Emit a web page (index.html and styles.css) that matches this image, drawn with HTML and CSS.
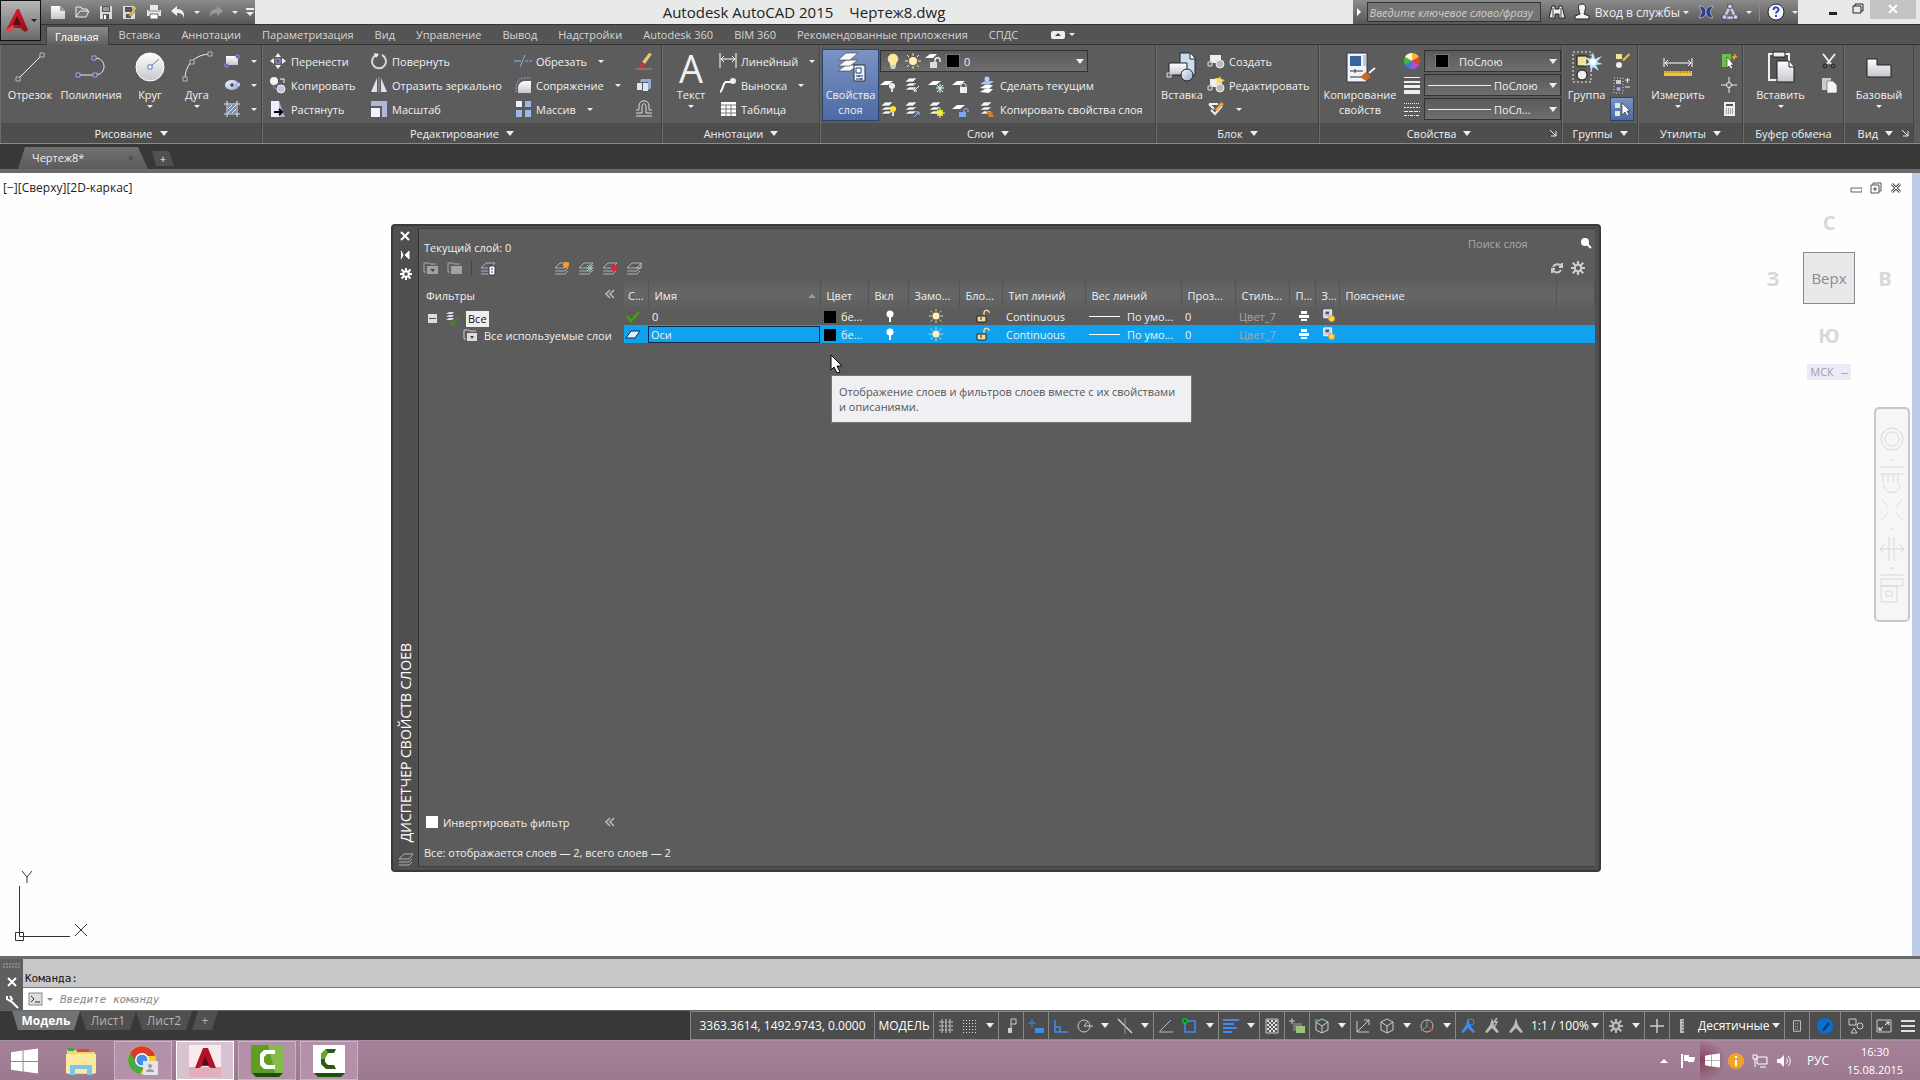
FILE: index.html
```html
<!DOCTYPE html>
<html lang="ru">
<head>
    <meta charset="UTF-8">
    <meta name="viewport" content="width=device-width, initial-scale=1.0">
    <title>Autodesk AutoCAD 2015 - Чертеж8.dwg</title>
    <link rel="stylesheet" href="styles.css">
</head>
<body>

<!-- Icon sprite -->
<svg class="sprite" aria-hidden="true">
    <defs>
        <linearGradient id="gWhite" x1="0" y1="0" x2="0" y2="1"><stop offset="0" stop-color="#fff"/><stop offset="1" stop-color="#c4c6cc"/></linearGradient>
        <linearGradient id="gRed" x1="0" y1="0" x2="1" y2="1"><stop offset="0" stop-color="#e8262f"/><stop offset="1" stop-color="#8d0c16"/></linearGradient>
        <linearGradient id="gBlue" x1="0" y1="0" x2="1" y2="1"><stop offset="0" stop-color="#f4f6fc"/><stop offset="1" stop-color="#98acd8"/></linearGradient>
    </defs>
    <symbol id="logo" viewBox="0 0 24 26"><path d="M12 1L1 22l3 2 5-4h6l5 4 3-2L14 1z" fill="url(#gRed)"/><path d="M12 8l-4 9h8z" fill="#5a0a10"/><path d="M1 22l3 2 5-4-1-3z" fill="#f0444c"/></symbol>
    <symbol id="new" viewBox="0 0 16 16"><path d="M1 2h9l5 5v8H1z" fill="url(#gWhite)"/><path d="M10 2v5h5" fill="#999"/></symbol>
    <symbol id="open" viewBox="0 0 16 16"><path d="M2 13V3h5l1 2h5v3M2 13l4-6h9l-3 6z" fill="#777" stroke="#eee"/></symbol>
    <symbol id="save" viewBox="0 0 16 16"><path d="M2 2h12v13H2z" fill="#d9dadd"/><path d="M4 2h8v6H4zM5 10h6v5H5z" fill="#555"/><path d="M5 4h6M5 6h6" stroke="#ddd"/><path d="M6 11h2v4H6z" fill="#fff"/></symbol>
    <symbol id="saveas" viewBox="0 0 16 16"><path d="M1 2h12v13H1z" fill="#d9dadd"/><path d="M3 3h7v5H3zM4 10h5v4H4z" fill="#555"/><path d="M7 11l6-9 2 2-6 8-3 1z" fill="#e8c23a" stroke="#444" stroke-width=".5"/></symbol>
    <symbol id="print" viewBox="0 0 16 16"><path d="M4 1h8v5H4zM1 6h14v6H1z" fill="#e8e8e8"/><path d="M4 10h8v5H4z" fill="#fff" stroke="#666"/><path d="M2 7h12" stroke="#888"/></symbol>
    <symbol id="undo" viewBox="0 0 16 16"><path d="M7 2L1 7l6 5V9c4 0 6 1 7 5 1-6-2-9-7-9z" fill="#eee"/></symbol>
    <symbol id="redo" viewBox="0 0 16 16"><path d="M9 2l6 5-6 5V9c-4 0-6 1-7 5-1-6 2-9 7-9z" fill="#999"/></symbol>
    <symbol id="binoc" viewBox="0 0 18 18"><path d="M4 3h3v3h4V3h3l3 12h-6v-4H7v4H1z" fill="#eee" stroke="#222"/><path d="M5 5v9M13 5v9" stroke="#444"/></symbol>
    <symbol id="person" viewBox="0 0 18 18"><path d="M9 1c4 0 4 4 3 6 0 2-1 3-1 4l5 2v3H2v-3l5-2c0-1-1-2-1-4-1-2-1-6 3-6z" fill="#f3f3f3" stroke="#222"/></symbol>
    <symbol id="exch" viewBox="0 0 16 16"><path d="M1 2c6 0 7 4 7 6S7 14 1 14l3-6z" fill="#2d3d8c" stroke="#ddd" stroke-width=".6"/><path d="M15 2c-6 0-7 4-7 6s1 6 7 6l-3-6z" fill="#2d3d8c" stroke="#ddd" stroke-width=".6"/></symbol>
    <symbol id="tri" viewBox="0 0 16 16"><path d="M8 3l5 10H3z" fill="none" stroke="#c9cdf0" stroke-width="2"/><g fill="#c9cdf0" stroke="#223" stroke-width=".6"><circle cx="8" cy="3" r="2.2"/><circle cx="13" cy="12.500" r="2.200"/><circle cx="3" cy="12.500" r="2.200"/></g></symbol>
    <symbol id="help" viewBox="0 0 18 18"><circle cx="9" cy="9" r="8" fill="#f5f6fa" stroke="#223"/><path d="M6.500 7c0-4 5.500-3 5 0 0 1.500-2.500 1.500-2.500 3.500M9 12v2" fill="none" stroke="#2447c8" stroke-width="2"/></symbol>

    <symbol id="line" viewBox="0 0 32 32"><path d="M4 28L28 4" stroke="#eee"/><path d="M2 26h4v4H2zM26 2h4v4h-4z" fill="#555" stroke="#bbb"/></symbol>
    <symbol id="pline" viewBox="0 0 32 32"><path d="M3 24h17c12 0 12-17 0-17" fill="none" stroke="#eee"/><path d="M1 22h4v4H1zM18 22h4v4h-4zM17 5h4v4h-4z" fill="#555" stroke="#a4a4ff"/></symbol>
    <symbol id="circle" viewBox="0 0 32 32"><circle cx="16" cy="16" r="14" fill="url(#gWhite)" stroke="#fff"/><path d="M16 16l9-8" stroke="#6c83b8"/><path d="M14 14h4v4h-4z" fill="#fff" stroke="#5d77c0"/></symbol>
    <symbol id="arc" viewBox="0 0 32 32"><path d="M4 28C4 14 14 3 30 3" fill="none" stroke="#eee"/><path d="M2 26h4v4H2zM9 9h4v4H9zM27 1h4v4h-4z" fill="#555" stroke="#bbb"/></symbol>
    <symbol id="rect" viewBox="0 0 16 16"><path d="M2 3h12v9H2z" fill="url(#gWhite)"/><path d="M12 2h3v3h-3zM1 11h3v3H1z" fill="#555" stroke="#8e8eff"/></symbol>
    <symbol id="ellipse" viewBox="0 0 16 16"><ellipse cx="8" cy="8" rx="7" ry="5" fill="url(#gBlue)"/><path d="M8 6v4M6 8h4" stroke="#222"/><path d="M13 6h3v3h-3z" fill="#fff" stroke="#88f"/></symbol>
    <symbol id="hatch" viewBox="0 0 16 16"><path d="M3 0v16M13 0v16M0 3h16M0 13h16" stroke="#dce6f6"/><path d="M4 4h8v8H4z" fill="#6f90bf"/><path d="M4 8l4-4M4 12l8-8M8 12l4-4" stroke="#e8f0ff"/></symbol>

    <symbol id="move" viewBox="0 0 18 18"><path d="M9 1l3 4H6zM9 17l3-4H6zM1 9l4-3v6zM17 9l-4-3v6z" fill="#f2f2f2"/><path d="M7 7h4v4H7z" fill="#555" stroke="#99f"/></symbol>
    <symbol id="copy" viewBox="0 0 18 18"><circle cx="5" cy="5" r="4" fill="#f3f3f3"/><circle cx="12" cy="13" r="4" fill="#bcc5e2" stroke="#eee"/><circle cx="7" cy="10" r="2.500" fill="none" stroke="#ccc" stroke-dasharray="1 1"/><path d="M11 3h4v4" fill="none" stroke="#fff"/></symbol>
    <symbol id="stretch" viewBox="0 0 18 18"><path d="M2 1h8v16H2z" fill="#eef"/><path d="M10 1l6 16h-6z" fill="#9fb3dd"/><path d="M5 12h7M10 9l3 3-3 3" fill="none" stroke="#000" stroke-width="2"/></symbol>
    <symbol id="rotate" viewBox="0 0 18 18"><path d="M6 3a7 7 0 1 0 6 0" fill="none" stroke="#d8d8d8" stroke-width="2"/><path d="M4 1l5 1-3 4z" fill="#eee"/></symbol>
    <symbol id="mirror" viewBox="0 0 18 18"><path d="M7 2v14H1zM11 2v14h6z" fill="#dfe3f0"/><path d="M9 1v16" stroke="#99a"/></symbol>
    <symbol id="scale" viewBox="0 0 18 18"><path d="M1 1h16v16h-5V6H1z" fill="#aeb6da"/><path d="M1 8h9v9H1z" fill="#f3f3fa"/></symbol>
    <symbol id="trim" viewBox="0 0 18 18"><path d="M0 9h7M6 15l5-12" stroke="#8fb2e6"/><path d="M11 9h7" stroke="#aaa" stroke-dasharray="3 1"/></symbol>
    <symbol id="fillet" viewBox="0 0 18 18"><path d="M4 17V12c0-4 3-7 7-7h6v12z" fill="url(#gWhite)"/><path d="M2 16V11c0-5 4-9 9-9h6" fill="none" stroke="#8fa8dd" stroke-dasharray="2 1"/></symbol>
    <symbol id="array" viewBox="0 0 18 18"><path d="M2 1h6v6H2z" fill="#f0f0f4"/><path d="M11 1h6v6h-6zM2 10h6v7H2zM11 10h6v7h-6z" fill="#9cb8e8"/></symbol>
    <symbol id="erase" viewBox="0 0 18 18"><path d="M7 10l7-9 3 1-7 10z" fill="#e9c66c"/><path d="M7 10l3 2-4 4H3z" fill="#d0342c"/><path d="M1 17h16" stroke="#e87060"/></symbol>
    <symbol id="explode" viewBox="0 0 18 18"><path d="M6 3h10v9l-3 2V6H5z" fill="#93acd0"/><path d="M2 7h5v7H2zM8 7h5v8H8z" fill="#dbe7f6"/></symbol>
    <symbol id="offset" viewBox="0 0 18 18"><path d="M1 16h16M1 13h6V6c0-3 4-3 4 0v7h6M1 10h3V6c0-7 10-7 10 0v4h3" fill="none" stroke="#ddd"/></symbol>
    <symbol id="dim" viewBox="0 0 18 18"><path d="M1 1v15M17 1v15M2 7h14M5 4L2 7l3 3M13 4l3 3-3 3" fill="none" stroke="#fff"/></symbol>
    <symbol id="leader" viewBox="0 0 18 18"><path d="M1 16c3-1 3-10 6-10h5" fill="none" stroke="#fff" stroke-width="2"/><circle cx="14" cy="5" r="3" fill="#eee"/></symbol>
    <symbol id="table" viewBox="0 0 18 18"><path d="M2 2h15v14H2z" fill="#fff"/><path d="M2 5h15M2 9h15M2 13h15M7 5v11M12 5v11" stroke="#777"/></symbol>
    <symbol id="layerprops" viewBox="0 0 32 32"><g fill="#f7f9fc" stroke="#333" stroke-width=".6"><path d="M3 20l8-6h12l-8 6z"/><path d="M3 15l8-6h12l-8 6z"/><path d="M3 9l8-7h12l-8 7z"/></g><path d="M19 14h11v16H19z" fill="#e8edf8" stroke="#333"/><path d="M21 17h5v5h-5z" fill="#fff" stroke="#24407a"/><path d="M21 25h7M21 28h7M24 24v2M26 27v2" stroke="#24407a"/></symbol>
    <symbol id="bulb" viewBox="0 0 18 18"><path d="M6 11C2 7 5 2 9 2s7 5 3 9l-1 5H7z" fill="#ffe79a" stroke="#fff3c8" stroke-width=".6"/><path d="M7 13h4v4H7z" fill="#ccc"/></symbol>
    <symbol id="sun" viewBox="0 0 18 18"><path d="M9 1v3M9 14v3M1 9h3M14 9h3M3 3l2 2M13 13l2 2M3 15l2-2M13 5l2-2" stroke="#f5e8b0"/><circle cx="9" cy="9" r="4" fill="#fff0b8"/></symbol>
    <symbol id="lockopen" viewBox="0 0 18 18"><path d="M1 6l5-4h7l-4 4z" fill="#fff"/><path d="M6 10h7v6H6z" fill="#ddd"/><path d="M11 10V8c0-3 5-3 5 0v2" fill="none" stroke="#eee" stroke-width="1.500"/></symbol>
    <symbol id="flat" viewBox="0 0 18 18"><path d="M1 9l5-4h8l-5 4z" fill="#fff"/></symbol>
    <symbol id="stack" viewBox="0 0 18 18"><g fill="#f4f4f4" stroke="#444" stroke-width=".5"><path d="M2 14l4-3h8l-4 3z"/><path d="M2 10l4-3h8l-4 3z"/><path d="M2 6l4-4h8l-4 4z"/></g></symbol>
    <symbol id="l-off" viewBox="0 0 18 18"><use href="#flat"/><circle cx="13" cy="10" r="3" fill="#eee"/><path d="M12 12h2v4h-2z" fill="#ddd"/></symbol>
    <symbol id="l-on" viewBox="0 0 18 18"><use href="#stack"/><circle cx="14" cy="9" r="3" fill="#ffe52c"/><path d="M13 12h2v4h-2z" fill="#ddd"/></symbol>
    <symbol id="l-iso" viewBox="0 0 18 18"><use href="#stack"/><path d="M16 10l-5 5m0-3v3h3" fill="none" stroke="#fff"/></symbol>
    <symbol id="l-uniso" viewBox="0 0 18 18"><use href="#stack"/><path d="M11 17l5-5m-3 0h3v3" fill="none" stroke="#9cc0ff"/></symbol>
    <symbol id="l-freeze" viewBox="0 0 18 18"><use href="#flat"/><path d="M13 8v9M9 12h8M10 9l6 7M10 16l6-7" stroke="#dff"/></symbol>
    <symbol id="l-thaw" viewBox="0 0 18 18"><use href="#stack"/><circle cx="13" cy="13" r="3" fill="#f4f03a"/><path d="M13 8v10M8 13h10M10 10l6 6M10 16l6-6" stroke="#f4f03a"/></symbol>
    <symbol id="l-lock" viewBox="0 0 18 18"><use href="#flat"/><path d="M9 11h7v6H9z" fill="#eee"/><path d="M10 11V9c0-2 5-2 5 0v2" fill="none" stroke="#eee"/></symbol>
    <symbol id="l-unlock" viewBox="0 0 18 18"><use href="#flat"/><path d="M8 12h7v5H8z" fill="#7fa6ec"/><path d="M13 12v-2c0-2 4-2 4 0v2" fill="none" stroke="#9cc0ff"/></symbol>
    <symbol id="l-cur" viewBox="0 0 18 18"><path d="M2 12l5-3h8l-4 4zM2 16l5-3h8l-4 4z" fill="#fff"/><path d="M2 8l5-3h9l-5 4z" fill="#a9c4f0"/><circle cx="9" cy="3" r="2.500" fill="#a9d0ff"/></symbol>
    <symbol id="l-match" viewBox="0 0 18 18"><use href="#stack"/><path d="M8 11l6 1 2 5h-5z" fill="#d57a26"/></symbol>
    <symbol id="insert" viewBox="0 0 32 32"><path d="M14 2h10l5 5v17H14z" fill="#c9dcf0" stroke="#223"/><path d="M24 2v6h5" fill="#fff" stroke="#223"/><path d="M3 12h18v12H3z" fill="url(#gWhite)" stroke="#222"/><circle cx="21" cy="24" r="6" fill="url(#gBlue)" stroke="#222"/><path d="M1 22h4v4H1z" fill="#666" stroke="#ddd"/></symbol>
    <symbol id="blk" viewBox="0 0 18 18"><path d="M3 3h11v8H3z" fill="#eee"/><circle cx="13" cy="12" r="4" fill="#bbb" stroke="#eee"/><path d="M1 10h4v4H1z" fill="#666" stroke="#ddd"/></symbol>
    <symbol id="blkedit" viewBox="0 0 18 18"><use href="#blk"/><path d="M13 0l1 3 4 1-3 2v3l-3-2-3 1 1-3-2-3h4z" fill="#f6dc62"/></symbol>
    <symbol id="attr" viewBox="0 0 18 18"><path d="M2 4h9M2 4l5 5M4 10l4 4 7-8" fill="none" stroke="#eee" stroke-width="2"/><path d="M8 10l6-8 3 2-7 7z" fill="#f0a030"/></symbol>
    <symbol id="matchprop" viewBox="0 0 32 32"><path d="M3 2h20v29H3z" fill="#eef2fb" stroke="#334"/><path d="M6 5h11v10H6z" fill="#36649f"/><path d="M19 4h3v11h-3z" fill="#b5cbe8"/><path d="M6 20h13M6 26h13M11 18v4" stroke="#333"/><path d="M25 22l6-5" stroke="#eee" stroke-width="2"/><path d="M16 26l6-5 5 5-5 4z" fill="#c96a25"/></symbol>
    <symbol id="wheel" viewBox="0 0 18 18"><path d="M9 9L9 1a8 8 0 0 1 7 4z" fill="#f6b93a"/><path d="M9 9l7-4a8 8 0 0 1 0 8z" fill="#e8402f"/><path d="M9 9l7 4a8 8 0 0 1-7 4z" fill="#b04fd8"/><path d="M9 9v8a8 8 0 0 1-7-4z" fill="#3a7be0"/><path d="M9 9l-7 4a8 8 0 0 1 0-8z" fill="#42b848"/><path d="M9 9L2 5a8 8 0 0 1 7-4z" fill="#fff2d8"/></symbol>
    <symbol id="weights" viewBox="0 0 18 18"><path d="M1 1h16v1H1zM1 5h16v2H1zM1 9h16v3H1zM1 14h16v4H1z" fill="#eee"/></symbol>
    <symbol id="types" viewBox="0 0 18 18"><path d="M1 3.500h16" stroke="#eee" stroke-dasharray="1 1"/><path d="M1 7.500h16" stroke="#eee" stroke-dasharray="2 1"/><path d="M1 11.500h16" stroke="#eee" stroke-dasharray="4 1"/><path d="M1 15.500h16" stroke="#eee" stroke-dasharray="3 1 1 1"/></symbol>
    <symbol id="group" viewBox="0 0 32 32"><path d="M2 1h18v30H2z" fill="none" stroke="#eee" stroke-dasharray="2 2"/><path d="M6 5h10v10H6z" fill="#efe39a" stroke="#111"/><circle cx="11" cy="24" r="5" fill="#eee" stroke="#111"/><path d="M22 1l2 7 7-3-5 6 6 2-7 1 3 6-6-4-2 5-1-7-6 1 5-4-4-5 6 2z" fill="#bfe4ff"/><circle cx="22" cy="11" r="3" fill="#fff"/></symbol>
    <symbol id="ungroup" viewBox="0 0 18 18"><path d="M3 2h6v5H3z" fill="#efe39a"/><circle cx="6" cy="13" r="3" fill="#eee"/><path d="M9 8l7-7 1 2-6 6z" fill="#e8c23a"/></symbol>
    <symbol id="grpedit" viewBox="0 0 18 18"><path d="M1 2h9v15H1z" fill="none" stroke="#ddd" stroke-dasharray="1 2"/><path d="M3 4h5v4H3z" fill="#ccc"/><circle cx="5.500" cy="13" r="2" fill="#aaf"/><path d="M12 4h5M14.500 2v5M12 11h5" stroke="#eee"/></symbol>
    <symbol id="grpsel" viewBox="0 0 18 18"><path d="M2 3h5v5H2zM2 11h5v5H2z" fill="#d8f0c8"/><path d="M9 3v12l3-3 2 4 2-1-2-4h3z" fill="#fff" stroke="#222" stroke-width=".6"/></symbol>
    <symbol id="measure" viewBox="0 0 32 32"><path d="M2 7v9M30 7v9M3 12h26M6 9l-3 3 3 3M26 9l3 3-3 3" fill="none" stroke="#fff"/><path d="M2 20h28v5H2z" fill="#f2c230"/><path d="M4 20v2M7 20v2M10 20v2M13 20v2M16 20v2M19 20v2M22 20v2M25 20v2M28 20v2" stroke="#8a6a10"/></symbol>
    <symbol id="qsel" viewBox="0 0 18 18"><path d="M2 2h9v13H2z" fill="#6bbf4a"/><path d="M7 5v11l2-2 2 3 2-1-2-3h3z" fill="#fff" stroke="#222" stroke-width=".6"/><path d="M15 1l1 3 2 1-3 1-1 3-1-3-2-1 3-1z" fill="#f5a623"/></symbol>
    <symbol id="point" viewBox="0 0 18 18"><path d="M9 1v16M1 9h16" stroke="#eee"/><circle cx="9" cy="9" r="2.500" fill="#666" stroke="#eee"/></symbol>
    <symbol id="calc" viewBox="0 0 18 18"><path d="M4 2h11v14H4z" fill="#eee"/><path d="M6 4h7v2H6z" fill="#555"/><path d="M6 9h7M6 11h7M6 13h7" stroke="#555" stroke-dasharray="1 1"/></symbol>
    <symbol id="paste" viewBox="0 0 32 32"><path d="M4 3h20v26H4z" fill="#555" stroke="#eee" stroke-width="2"/><path d="M8 1h12v5H8z" fill="#eee" stroke="#222"/><path d="M12 10h12l5 6v15H12z" fill="url(#gWhite)" stroke="#222"/><path d="M24 10v6h5" fill="#fff" stroke="#222"/></symbol>
    <symbol id="cut" viewBox="0 0 18 18"><path d="M3 2l8 10M15 2L7 12" stroke="#f0f0f0" stroke-width="2"/><circle cx="5" cy="14" r="2" fill="none" stroke="#222"/><circle cx="13" cy="14" r="2" fill="none" stroke="#222"/></symbol>
    <symbol id="copy2" viewBox="0 0 18 18"><path d="M2 2h9v12H2z" fill="#ccc"/><path d="M7 5h6l4 4v8H7z" fill="#f4f4f4" stroke="#555" stroke-width=".6"/></symbol>
    <symbol id="base" viewBox="0 0 32 32"><path d="M4 8h10v6h14v12H4z" fill="url(#gWhite)" stroke="#222"/></symbol>
    <symbol id="launch" viewBox="0 0 10 10"><path d="M2 2l6 6M8 3v5H3" fill="none" stroke="#eee"/></symbol>

    <symbol id="folder" viewBox="0 0 16 16"><path d="M3 12H1V3h5l1 1h6" fill="none" stroke="#a8a8a8"/><path d="M4 6h11v8H4z" fill="#a2a2a2"/></symbol>
    <symbol id="layline" viewBox="0 0 16 16"><path d="M1 8l5-5h9l-4 5zM1 11h10l3-3M1 14h10l3-3" fill="none" stroke="#b0b0b0"/></symbol>
    <symbol id="gear" viewBox="0 0 16 16"><path d="M8 0v16M0 8h16M2 2l12 12M2 14L14 2" stroke="currentColor" stroke-width="2.500"/><circle cx="8" cy="8" r="5" fill="currentColor"/><circle cx="8" cy="8" r="2.500" class="hole"/></symbol>
    <symbol id="chev" viewBox="0 0 12 12"><path d="M6 2L2 6l4 4M10 2L6 6l4 4" fill="none" stroke="#bbb" stroke-width="1.500"/></symbol>
    <symbol id="check" viewBox="0 0 16 16"><path d="M2 8l4 5 8-9" fill="none" stroke="#3fa312" stroke-width="2.500"/></symbol>
    <symbol id="lamp" viewBox="0 0 16 16"><circle cx="8" cy="6" r="3.500" fill="#fff"/><path d="M7 8h2v6H7z" fill="#fff"/></symbol>
    <symbol id="padlock" viewBox="0 0 16 16"><path d="M2 8h9v6H2z" fill="#f2d8a0" stroke="#222"/><path d="M9 7V5c0-4 6-3 5 0" fill="none" stroke="#f2d8a0" stroke-width="1.500"/><path d="M6 9v3" stroke="#222"/></symbol>
    <symbol id="plot" viewBox="0 0 12 12"><path d="M3 1h6v3H3zM1 5h10v3H1zM3 9h6v2H3z" fill="#fff"/></symbol>
    <symbol id="vpf" viewBox="0 0 16 16"><path d="M2 1h9v9H2z" fill="#c9d0ea" stroke="#fff"/><path d="M4 3h4v3H4z" fill="#555"/><circle cx="11" cy="11" r="3.500" fill="#ffd84a" stroke="#d98c20"/></symbol>

    <symbol id="s-grid" viewBox="0 0 16 16"><path d="M4 1v14M8 1v14M12 1v14" stroke="#ccc"/><path d="M1 4h14M1 8h14M1 12h14" stroke="#ccc" stroke-dasharray="2 1"/></symbol>
    <symbol id="s-dots" viewBox="0 0 16 16"><path d="M1 2.500h14M1 5.500h14M1 8.500h14M1 11.500h14M1 14.500h14" stroke="#ddd" stroke-dasharray="1 2"/></symbol>
    <symbol id="s-infer" viewBox="0 0 16 16"><path d="M8 1h5v5H8zM8 6v5" fill="none" stroke="#ccc"/><path d="M5 10h4v5H5z" fill="#ccc"/></symbol>
    <symbol id="s-dyn" viewBox="0 0 16 16"><path d="M4 1v8M0 5h8" stroke="#3d8df0"/><path d="M7 10h9v5H7z" fill="#3d8df0"/></symbol>
    <symbol id="s-ortho" viewBox="0 0 16 16"><path d="M2 2v12h13M2 9h5v5" fill="none" stroke="#3d8df0" stroke-width="1.500"/></symbol>
    <symbol id="s-polar" viewBox="0 0 16 16"><circle cx="7" cy="8" r="6" fill="none" stroke="#ccc"/><path d="M7 8h9M7 8l4-5" stroke="#ccc"/></symbol>
    <symbol id="s-iso" viewBox="0 0 16 16"><path d="M1 1l14 14" stroke="#ccc" stroke-width="1.500"/><path d="M8 0v16" stroke="#8aa080"/></symbol>
    <symbol id="s-track" viewBox="0 0 16 16"><path d="M1 14h14M2 13L13 2" stroke="#bbb"/></symbol>
    <symbol id="s-snap" viewBox="0 0 16 16"><path d="M3 3h10v11H3z" fill="none" stroke="#3d8df0" stroke-width="1.500"/><path d="M1 1h4v4H1z" fill="#063" stroke="#1d2"/></symbol>
    <symbol id="s-lw" viewBox="0 0 16 16"><path d="M0 2h16M0 6h11M0 10h14M0 14h9" stroke="#3d8df0" stroke-width="2"/></symbol>
    <symbol id="s-transp" viewBox="0 0 16 16"><path d="M2 1h12v14H2z" fill="#555" stroke="#ccc"/><path d="M3 3h10M3 7h10M3 11h10" stroke="#ddd" stroke-width="2" stroke-dasharray="2 2"/><path d="M5 5h8M5 9h8M5 13h8" stroke="#ddd" stroke-width="2" stroke-dasharray="2 2"/></symbol>
    <symbol id="s-cycle" viewBox="0 0 16 16"><path d="M3 0v6M0 3h6" stroke="#ccc"/><path d="M4 5h9v8H4z" fill="#777"/><path d="M7 8h9v7H7z" fill="#9cc27e"/></symbol>
    <symbol id="s-cube" viewBox="0 0 16 16"><path d="M8 1l6 3v8l-6 3-6-3V4zM2 4l6 4 6-4M8 8v7" fill="none" stroke="#ccc"/></symbol>
    <symbol id="s-cubesnap" viewBox="0 0 16 16"><use href="#s-cube"/><path d="M1 1h3v3H1z" fill="#1c1"/></symbol>
    <symbol id="s-ucs" viewBox="0 0 16 16"><path d="M2 3v11h12M2 14L14 2M9 2h5v5" fill="none" stroke="#ccc"/></symbol>
    <symbol id="s-gizmo" viewBox="0 0 16 16"><circle cx="8" cy="8" r="6" fill="none" stroke="#bbb"/><path d="M8 8V1" stroke="#88f"/><path d="M8 8l6 5" stroke="#e33"/><path d="M8 8l-6 5" stroke="#8a4"/></symbol>
    <symbol id="s-anno" viewBox="0 0 16 16"><path d="M8 0l2 7 5 7-2 1-5-5-5 5-2-1 5-7z" fill="currentColor"/></symbol>
    <symbol id="s-annovis" viewBox="0 0 16 16"><use href="#s-anno"/><circle cx="11" cy="4" r="3" fill="none" stroke="currentColor"/></symbol>
    <symbol id="s-annoauto" viewBox="0 0 16 16"><use href="#s-anno"/><path d="M13 0l-3 4h3l-2 4" fill="none" stroke="currentColor" stroke-width="1.500"/></symbol>
    <symbol id="s-plus" viewBox="0 0 16 16"><path d="M8 1v14M1 8h14" stroke="#ccc" stroke-width="1.500"/></symbol>
    <symbol id="s-unit" viewBox="0 0 16 16"><path d="M6 1h4v14H6z" fill="#bbb"/><path d="M8 3h2M8 6h2M8 9h2M8 12h2" stroke="#555"/></symbol>
    <symbol id="s-qp" viewBox="0 0 16 16"><path d="M4 2h8v12H4z" fill="none" stroke="#ccc"/><path d="M6 5.500h4M6 8.500h4M6 11.500h4" stroke="#ccc" stroke-dasharray="1 1"/></symbol>
    <symbol id="s-gfx" viewBox="0 0 16 16"><circle cx="8" cy="8" r="8" fill="#0b6fd0"/><path d="M5 12l6-8 2 2-6 7z" fill="#0a3a78"/></symbol>
    <symbol id="s-isol" viewBox="0 0 16 16"><path d="M1 1h7v6H1zM3 15l3-5 3 5z" fill="none" stroke="#ccc"/><circle cx="12" cy="8" r="3" fill="none" stroke="#ccc"/></symbol>
    <symbol id="s-full" viewBox="0 0 16 16"><path d="M1 2h14v12H1z" fill="none" stroke="#ccc"/><path d="M9 7l4-3m-3 0h3v3M7 9l-4 3m0-3v3h3" fill="none" stroke="#fff"/></symbol>
    <symbol id="s-menu" viewBox="0 0 16 16"><path d="M1 3h14M1 8h14M1 13h14" stroke="#ddd" stroke-width="2"/></symbol>

    <symbol id="winlogo" viewBox="0 0 28 26"><path d="M0 4l12-2v11H0zM13 2l15-2v13H13zM0 14h12v10L0 22zM13 14h15v12l-15-2z" fill="#fff"/></symbol>
    <symbol id="explorer" viewBox="0 0 32 32"><path d="M2 5h9l2 2h17v22H2z" fill="#f0d574"/><path d="M3 3h6v3H3z" fill="#3aa648"/><path d="M12 4h12v3H12z" fill="#d8493a"/><path d="M1 9h30v19H1z" fill="#fbeaa0"/><path d="M5 30V20h22v10h-5v-6H10v6z" fill="#7cc6ea"/></symbol>
    <symbol id="chrome" viewBox="0 0 32 32"><circle cx="15" cy="15" r="14" fill="#f7cf2c"/><path d="M3 8a14 14 0 0 1 24 0L28 11H15L9 17z" fill="#dc3a2e"/><path d="M3 8a14 14 0 0 0 10 21l6-10-8 0z" fill="#49a84c"/><circle cx="15" cy="15" r="7" fill="#fff"/><circle cx="15" cy="15" r="5.500" fill="#4a8ce8"/><path d="M16 16h15v14H16z" fill="#e6e4e8"/><circle cx="23" cy="21" r="2" fill="#99a"/><path d="M19 27c0-4 8-4 8 0z" fill="#99a"/></symbol>
    <symbol id="acad" viewBox="0 0 32 32"><path d="M0 0h32v32H0z" fill="#f7e9ee"/><path d="M0 22h32v10H0z" fill="#e3aebc"/><path d="M14 3h5l8 20h-5l-3-2h-6l-3 2H6z" fill="#b3122a"/><path d="M16 11l-3 9h7z" fill="#5a0a18"/></symbol>
    <symbol id="camt1" viewBox="0 0 32 32"><path d="M0 0h32v28H0z" fill="#5f9e22"/><path d="M17 0h15v28H24z" fill="#86bb4a"/><path d="M1 28h31l-4 4H5z" fill="#1d4f0c"/><path d="M24 5H13L9 9v11l4 4h11v-4h-8l-3-3v-5l3-3h8z" fill="#fff"/></symbol>
    <symbol id="camt2" viewBox="0 0 32 32"><path d="M0 0h32v28H0z" fill="#fff"/><path d="M1 28h31l-4 4H5z" fill="#1d4f0c"/><path d="M23 4H13L8 9v10l5 5h10l-2-4h-6l-3-3v-6l3-3h6z" fill="#2b5a14"/><path d="M13 4L8 9v5h4l3-6z" fill="#6aa42a"/></symbol>
</svg>

<!-- Title bar -->
<header class="titlebar">
    <button class="app-button" aria-label="Меню приложения"><svg width="24" height="26"><use href="#logo"/></svg><i class="arrow dark"></i></button>
    <div class="qat">
        <button><svg class="i16"><use href="#new"/></svg></button>
        <button><svg class="i16"><use href="#open"/></svg></button>
        <button><svg class="i16"><use href="#save"/></svg></button>
        <button><svg class="i16"><use href="#saveas"/></svg></button>
        <button><svg class="i16"><use href="#print"/></svg></button>
        <button><svg class="i16"><use href="#undo"/></svg></button>
        <i class="arrow"></i>
        <button><svg class="i16"><use href="#redo"/></svg></button>
        <i class="arrow"></i>
        <button><svg width="8" height="8"><path d="M0 0h8v2H0zM0 4h8L4 8z" fill="#eee"/></svg></button>
    </div>
    <div class="title"><span>Autodesk AutoCAD 2015</span><span>Чертеж8.dwg</span></div>
    <div class="infocenter">
        <button class="info-toggle"><i class="arrow-right"></i></button>
        <input type="text" class="info-search" aria-label="Поиск" placeholder="Введите ключевое слово/фразу">
        <button><svg class="i18"><use href="#binoc"/></svg></button>
        <button><svg class="i18"><use href="#person"/></svg></button>
        <button class="signin">Вход в службы <i class="arrow"></i></button>
        <button><svg class="i16"><use href="#exch"/></svg></button>
        <button><svg class="i18"><use href="#tri"/></svg></button>
        <i class="arrow"></i>
        <span class="info-sep"></span>
        <button><svg class="i18"><use href="#help"/></svg></button>
        <i class="arrow"></i>
    </div>
    <div class="window-buttons">
        <button aria-label="Свернуть"><svg width="10" height="12"><path d="M1 9h8v3H1z" fill="#222"/></svg></button>
        <button aria-label="Развернуть"><svg width="12" height="12"><path d="M3 3V1h8v7H9M1 3h8v7H1z" fill="none" stroke="#222" stroke-width="1"/></svg></button>
        <button class="close" aria-label="Закрыть"><svg width="10" height="10"><path d="M1 1l8 8M9 1L1 9" stroke="#fff" stroke-width="2"/></svg></button>
    </div>
</header>

<nav class="ribbon-tabs">
    <button class="active">Главная</button>
    <button>Вставка</button>
    <button>Аннотации</button>
    <button>Параметризация</button>
    <button>Вид</button>
    <button>Управление</button>
    <button>Вывод</button>
    <button>Надстройки</button>
    <button>Autodesk 360</button>
    <button>BIM 360</button>
    <button>Рекомендованные приложения</button>
    <button>СПДС</button>
    <button class="ribbon-min"><svg width="14" height="8"><rect width="14" height="8" rx="2" fill="#eee"/><path d="M4 5l3-3 3 3z" fill="#444"/></svg><i class="arrow"></i></button>
</nav>

<!-- Ribbon -->
<div class="ribbon">
    <section class="panel draw">
        <div class="panel-body">
            <button class="big"><svg class="i32"><use href="#line"/></svg>Отрезок</button>
            <button class="big"><svg class="i32"><use href="#pline"/></svg>Полилиния</button>
            <button class="big"><svg class="i32"><use href="#circle"/></svg>Круг<i class="arrow"></i></button>
            <button class="big"><svg class="i32"><use href="#arc"/></svg>Дуга<i class="arrow"></i></button>
            <div class="rows">
                <button class="small"><svg class="i16"><use href="#rect"/></svg><i class="arrow"></i></button>
                <button class="small"><svg class="i16"><use href="#ellipse"/></svg><i class="arrow"></i></button>
                <button class="small"><svg class="i16"><use href="#hatch"/></svg><i class="arrow"></i></button>
            </div>
        </div>
        <h2>Рисование <i class="arrow lg"></i></h2>
    </section>

    <section class="panel modify">
        <div class="panel-body">
            <div class="rows">
                <button class="small"><svg class="i18"><use href="#move"/></svg>Перенести</button>
                <button class="small"><svg class="i18"><use href="#copy"/></svg>Копировать</button>
                <button class="small"><svg class="i18"><use href="#stretch"/></svg>Растянуть</button>
            </div>
            <div class="rows">
                <button class="small"><svg class="i18"><use href="#rotate"/></svg>Повернуть</button>
                <button class="small"><svg class="i18"><use href="#mirror"/></svg>Отразить зеркально</button>
                <button class="small"><svg class="i18"><use href="#scale"/></svg>Масштаб</button>
            </div>
            <div class="rows">
                <button class="small"><svg class="i18"><use href="#trim"/></svg>Обрезать<i class="arrow"></i></button>
                <button class="small"><svg class="i18"><use href="#fillet"/></svg>Сопряжение<i class="arrow"></i></button>
                <button class="small"><svg class="i18"><use href="#array"/></svg>Массив<i class="arrow"></i></button>
            </div>
            <div class="rows">
                <button class="small"><svg class="i18"><use href="#erase"/></svg></button>
                <button class="small"><svg class="i18"><use href="#explode"/></svg></button>
                <button class="small"><svg class="i18"><use href="#offset"/></svg></button>
            </div>
        </div>
        <h2>Редактирование <i class="arrow lg"></i></h2>
    </section>

    <section class="panel annot">
        <div class="panel-body">
            <button class="big"><span class="letter">A</span>Текст<i class="arrow"></i></button>
            <div class="rows">
                <button class="small"><svg class="i18"><use href="#dim"/></svg>Линейный<i class="arrow"></i></button>
                <button class="small"><svg class="i18"><use href="#leader"/></svg>Выноска<i class="arrow"></i></button>
                <button class="small"><svg class="i18"><use href="#table"/></svg>Таблица</button>
            </div>
        </div>
        <h2>Аннотации <i class="arrow lg"></i></h2>
    </section>

    <section class="panel layers">
        <div class="panel-body">
            <button class="big pressed"><svg class="i32"><use href="#layerprops"/></svg>Свойства<br>слоя</button>
            <div class="rows">
                <button class="combo layer-combo"><svg class="i18"><use href="#bulb"/></svg><svg class="i18"><use href="#sun"/></svg><svg class="i18"><use href="#lockopen"/></svg><i class="swatch"></i><span>0</span><i class="arrow lg"></i></button>
                <div class="row">
                    <button><svg class="i18"><use href="#l-off"/></svg></button>
                    <button><svg class="i18"><use href="#l-iso"/></svg></button>
                    <button><svg class="i18"><use href="#l-freeze"/></svg></button>
                    <button><svg class="i18"><use href="#l-lock"/></svg></button>
                    <button class="small"><svg class="i18"><use href="#l-cur"/></svg>Сделать текущим</button>
                </div>
                <div class="row">
                    <button><svg class="i18"><use href="#l-on"/></svg></button>
                    <button><svg class="i18"><use href="#l-uniso"/></svg></button>
                    <button><svg class="i18"><use href="#l-thaw"/></svg></button>
                    <button><svg class="i18"><use href="#l-unlock"/></svg></button>
                    <button class="small"><svg class="i18"><use href="#l-match"/></svg>Копировать свойства слоя</button>
                </div>
            </div>
        </div>
        <h2>Слои <i class="arrow lg"></i></h2>
    </section>

    <section class="panel block">
        <div class="panel-body">
            <button class="big"><svg class="i32"><use href="#insert"/></svg>Вставка</button>
            <div class="rows">
                <button class="small"><svg class="i18"><use href="#blk"/></svg>Создать</button>
                <button class="small"><svg class="i18"><use href="#blkedit"/></svg>Редактировать</button>
                <button class="small"><svg class="i18"><use href="#attr"/></svg><i class="arrow"></i></button>
            </div>
        </div>
        <h2>Блок <i class="arrow lg"></i></h2>
    </section>

    <section class="panel props">
        <div class="panel-body">
            <button class="big"><svg class="i32"><use href="#matchprop"/></svg>Копирование<br>свойств</button>
            <div class="rows icons">
                <button><svg class="i18"><use href="#wheel"/></svg></button>
                <button><svg class="i18"><use href="#weights"/></svg></button>
                <button><svg class="i18"><use href="#types"/></svg></button>
            </div>
            <div class="rows">
                <button class="combo"><i class="swatch"></i><span>ПоСлою</span><i class="arrow lg"></i></button>
                <button class="combo"><i class="sample"></i><span>ПоСлою</span><i class="arrow lg"></i></button>
                <button class="combo"><i class="sample"></i><span>ПоСл...</span><i class="arrow lg"></i></button>
            </div>
        </div>
        <h2 class="with-launch">Свойства <i class="arrow lg"></i><span class="launch"><svg width="10" height="10"><use href="#launch"/></svg></span></h2>
    </section>

    <section class="panel groups">
        <div class="panel-body">
            <button class="big"><svg class="i32"><use href="#group"/></svg>Группа</button>
            <div class="rows icons">
                <button><svg class="i18"><use href="#ungroup"/></svg></button>
                <button><svg class="i18"><use href="#grpedit"/></svg></button>
                <button class="pressed"><svg class="i18"><use href="#grpsel"/></svg></button>
            </div>
        </div>
        <h2>Группы <i class="arrow lg"></i></h2>
    </section>

    <section class="panel utils">
        <div class="panel-body">
            <button class="big"><svg class="i32"><use href="#measure"/></svg>Измерить<i class="arrow"></i></button>
            <div class="rows icons">
                <button><svg class="i18"><use href="#qsel"/></svg></button>
                <button><svg class="i18"><use href="#point"/></svg></button>
                <button><svg class="i18"><use href="#calc"/></svg></button>
            </div>
        </div>
        <h2>Утилиты <i class="arrow lg"></i></h2>
    </section>

    <section class="panel clip">
        <div class="panel-body">
            <button class="big"><svg class="i32"><use href="#paste"/></svg>Вставить<i class="arrow"></i></button>
            <div class="rows icons">
                <button><svg class="i18"><use href="#cut"/></svg></button>
                <button><svg class="i18"><use href="#copy2"/></svg></button>
            </div>
        </div>
        <h2>Буфер обмена</h2>
    </section>

    <section class="panel view">
        <div class="panel-body">
            <button class="big"><svg class="i32"><use href="#base"/></svg>Базовый<i class="arrow"></i></button>
        </div>
        <h2 class="with-launch">Вид <i class="arrow lg"></i><span class="launch"><svg width="10" height="10"><use href="#launch"/></svg></span></h2>
    </section>
</div>

<div class="file-tabs">
    <button class="file-tab">Чертеж8*<span>×</span></button>
    <button class="file-add">+</button>
</div>

<!-- Drawing area -->
<main class="canvas">
    <div class="viewport-label">[−][Сверху][2D-каркас]</div>

    <div class="doc-buttons">
        <svg width="12" height="12"><path d="M1 6h11v4H1z" fill="none" stroke="#666"/></svg>
        <svg width="12" height="12"><path d="M3 3V1h8v8H9M1 3h8v8H1zM4 6h2v2H4z" fill="none" stroke="#555"/></svg>
        <svg width="12" height="12"><path d="M2 2l8 8M10 2l-8 8" stroke="#555" stroke-width="3"/><path d="M2 2l8 8M10 2l-8 8" stroke="#fff"/></svg>
    </div>

    <div class="viewcube">
        <span class="north">С</span>
        <span class="west">З</span>
        <button class="face">Верх</button>
        <span class="east">В</span>
        <span class="south">Ю</span>
        <button class="wcs">МСК <i></i></button>
    </div>

    <div class="navbar">
        <svg width="24" height="200" viewBox="0 0 24 200" fill="none" stroke="#d8d8d8">
            <circle cx="12" cy="22" r="11"/><circle cx="12" cy="22" r="7"/>
            <path d="M10 43h4M0 50h24M0 57h24M3 57v10M8 57v8M13 57v8M18 57v10M4 68c0 10 16 10 16 0"/>
            <path d="M1 82l7 7M23 82l-7 7M1 103l7-7M23 103l-7-7" stroke-dasharray="3 1"/>
            <path d="M10 112h4M9 120v24M14 120v24M1 132h22M4 128l-4 4 4 4M20 128l4 4-4 4M10 151h4M0 158h24"/>
            <path d="M1 162h22v7H1zM1 169h16v16H1zM6 174h6v5H6z"/>
        </svg>
    </div>

    <svg class="ucs" width="80" height="76" viewBox="0 0 80 76" fill="none" stroke="#333">
        <path d="M8.500 66.500V16M8.500 66.500H59M4.500 62.500h8v8h-8z"/>
        <path d="M11 1l5 6 5-6M16 7v6M64 54l12 12M76 54L64 66"/>
    </svg>

    <!-- Layer properties manager -->
    <section class="palette">
        <div class="palette-bar">
            <button aria-label="Закрыть"><svg width="10" height="10"><path d="M1 1l8 8M9 1L1 9" stroke="#fff" stroke-width="2"/></svg></button>
            <button aria-label="Автоскрытие"><svg width="10" height="10"><path d="M1 1l2 4-2 4M9 1L5 5l4 4z" stroke="#fff" fill="#fff"/></svg></button>
            <button aria-label="Свойства"><svg class="i12"><use href="#gear"/></svg></button>
            <span class="palette-title">ДИСПЕТЧЕР СВОЙСТВ СЛОЕВ</span>
            <svg class="i16"><use href="#layline"/></svg>
        </div>
        <div class="palette-main">
            <div class="palette-head">
                <span>Текущий слой: 0</span>
                <div class="layer-search"><input type="text" aria-label="Поиск слоя" placeholder="Поиск слоя"><svg width="12" height="12"><circle cx="5" cy="5" r="4" fill="#fff"/><path d="M7 7l4 4" stroke="#fff" stroke-width="2"/></svg></div>
            </div>
            <div class="toolbar">
                <button><svg class="i16"><use href="#folder"/><path d="M7 9h5l-2 3z" fill="#444"/></svg></button>
                <button><svg class="i16"><use href="#folder"/></svg></button>
                <span class="tool-sep"></span>
                <button><svg class="i16"><use href="#layline"/><path d="M9 6h6v9H9z" fill="#fff" stroke="#335"/><path d="M11 9h2M11 12h2" stroke="#335"/></svg></button>
                <button class="first-layer"><svg class="i16"><use href="#layline"/><circle cx="12" cy="5" r="3" fill="#f59a2c"/></svg></button>
                <button><svg class="i16"><use href="#layline"/><path d="M12 4v8M8 8h8M9 5l6 6M9 11l6-6" stroke="#9fc4bd"/></svg></button>
                <button><svg class="i16"><use href="#layline"/><circle cx="12" cy="8" r="3" fill="#e8203c"/></svg></button>
                <button><svg class="i16"><use href="#layline"/><path d="M10 8h5V3" stroke="#ccc" fill="none"/></svg></button>
                <button class="right"><svg class="i12" fill="none" stroke="#ccc" stroke-width="2"><path d="M11 5a5 5 0 0 0-9 0M1 7a5 5 0 0 0 9 1M11 1v4H8M1 11V7h3"/></svg></button>
                <button><svg class="i14"><use href="#gear"/></svg></button>
            </div>
            <div class="palette-content">
                <aside class="filters">
                    <h3>Фильтры <svg class="i12"><use href="#chev"/></svg></h3>
                    <div class="tree-row"><i class="minus"></i><svg class="i16"><path d="M1 3l3-2h5L7 3zM1 6l3-2h5L7 6zM1 9l3-2h5L7 9z" fill="#dde"/><path d="M5 11l3 3 5-7" fill="none" stroke="#3f8c1c" stroke-width="2"/></svg><b>Все</b></div>
                    <div class="tree-row child"><svg class="i16"><path d="M3 11H1V2h5l1 1h6" fill="none" stroke="#ccc"/><path d="M4 5h10v8H4z" fill="#ddd"/><path d="M7 8h4l-2 3z" fill="#444"/></svg><span>Все используемые слои</span></div>
                    <div class="invert"><input type="checkbox" id="invert"><label for="invert">Инвертировать фильтр</label><svg class="i12"><use href="#chev"/></svg></div>
                </aside>
                <div class="layer-list">
                    <table>
                        <colgroup><col class="c-st"><col class="c-name"><col class="c-color"><col class="c-on"><col class="c-frz"><col class="c-lock"><col class="c-lt"><col class="c-lw"><col class="c-tr"><col class="c-style"><col class="c-plot"><col class="c-vp"><col class="c-desc"><col></colgroup>
                        <thead>
                            <tr><th>С...</th><th>Имя<i class="sort"></i></th><th>Цвет</th><th>Вкл</th><th>Замо...</th><th>Бло...</th><th>Тип линий</th><th>Вес линий</th><th>Проз...</th><th>Стиль...</th><th>П...</th><th>З...</th><th>Пояснение</th><th></th></tr>
                        </thead>
                        <tbody>
                            <tr>
                                <td><svg class="i16"><use href="#check"/></svg></td><td>0</td><td><i class="color"></i>бе...</td>
                                <td class="ic"><svg class="i16"><use href="#lamp"/></svg></td><td class="ic"><svg class="i16"><use href="#sun"/></svg></td><td class="ic"><svg class="i16"><use href="#padlock"/></svg></td>
                                <td>Continuous</td><td><i class="weight"></i>По умо...</td><td>0</td><td class="dim">Цвет_7</td>
                                <td class="ic"><svg class="i12"><use href="#plot"/></svg></td><td class="ic"><svg class="i14"><use href="#vpf"/></svg></td><td></td><td></td>
                            </tr>
                            <tr class="selected">
                                <td><svg class="i16"><path d="M1 12l5-7h9l-5 7z" fill="#dff0ff" stroke="#124"/></svg></td><td class="edit"><input type="text" aria-label="Имя слоя" value="Оси"></td><td><i class="color"></i>бе...</td>
                                <td class="ic"><svg class="i16"><use href="#lamp"/></svg></td><td class="ic"><svg class="i16"><use href="#sun"/></svg></td><td class="ic"><svg class="i16"><use href="#padlock"/></svg></td>
                                <td>Continuous</td><td><i class="weight"></i>По умо...</td><td>0</td><td class="dim">Цвет_7</td>
                                <td class="ic"><svg class="i12"><use href="#plot"/></svg></td><td class="ic"><svg class="i14"><use href="#vpf"/></svg></td><td></td><td></td>
                            </tr>
                        </tbody>
                    </table>
                </div>
            </div>
            <footer>Все: отображается слоев — 2, всего слоев — 2</footer>
        </div>
        <div class="tooltip">Отображение слоев и фильтров слоев вместе с их свойствами<br>и описаниями.</div>
        <svg class="cursor" width="12" height="20" viewBox="0 0 12 20"><path d="M1 1v15l3-3 3 6 3-1-3-6h5z" fill="#fff" stroke="#000"/></svg>
    </section>
</main>

<!-- Command line -->
<div class="command">
    <div class="command-bar">
        <svg width="18" height="5"><path d="M0 1h18M0 4h18" stroke="#aaa" stroke-dasharray="2 1"/></svg>
        <svg width="10" height="10"><path d="M1 1l8 8M9 1L1 9" stroke="#fff" stroke-width="2"/></svg>
        <svg width="14" height="14"><path d="M5 5l8 8M2 1v3l3 2 2-2-2-3" stroke="#fff" stroke-width="2" fill="none"/></svg>
    </div>
    <div class="command-lines">
        <div class="history">Команда:</div>
        <div class="prompt">
            <svg width="15" height="14"><rect x="1" y="1" width="13" height="12" fill="#ddd" stroke="#888"/><path d="M3 4l3 3-3 3M7 10h5" fill="none" stroke="#333"/></svg>
            <i class="arrow grey"></i>
            <input type="text" aria-label="Команда" placeholder="Введите команду">
        </div>
    </div>
</div>

<div class="statusbar">
    <div class="layout-tabs">
        <button class="active">Модель</button>
        <button>Лист1</button>
        <button>Лист2</button>
        <button class="add">+</button>
    </div>
    <div class="status">
        <div class="cell coords">3363.3614, 1492.9743, 0.0000</div>
        <div class="cell model">МОДЕЛЬ</div>
        <div class="cell"><button><svg class="i16"><use href="#s-grid"/></svg></button><button><svg class="i16"><use href="#s-dots"/></svg></button><i class="arrow lg"></i></div>
        <div class="cell"><button><svg class="i16"><use href="#s-infer"/></svg></button></div>
        <div class="cell"><button><svg class="i16"><use href="#s-dyn"/></svg></button></div>
        <div class="cell"><button><svg class="i16"><use href="#s-ortho"/></svg></button><button><svg class="i16"><use href="#s-polar"/></svg></button><i class="arrow lg"></i><button><svg class="i16"><use href="#s-iso"/></svg></button><i class="arrow lg"></i></div>
        <div class="cell"><button><svg class="i16"><use href="#s-track"/></svg></button><button><svg class="i16"><use href="#s-snap"/></svg></button><i class="arrow lg"></i></div>
        <div class="cell"><button><svg class="i16"><use href="#s-lw"/></svg></button><i class="arrow lg"></i></div>
        <div class="cell"><button><svg class="i16"><use href="#s-transp"/></svg></button></div>
        <div class="cell"><button><svg class="i16"><use href="#s-cycle"/></svg></button></div>
        <div class="cell"><button><svg class="i16"><use href="#s-cubesnap"/></svg></button><i class="arrow lg"></i></div>
        <div class="cell"><button><svg class="i16"><use href="#s-ucs"/></svg></button><button><svg class="i16"><use href="#s-cube"/></svg></button><i class="arrow lg"></i><button><svg class="i16"><use href="#s-gizmo"/></svg></button><i class="arrow lg"></i></div>
        <div class="cell"><button class="on"><svg class="i16"><use href="#s-annovis"/></svg></button><button><svg class="i16"><use href="#s-annoauto"/></svg></button><button><svg class="i16"><use href="#s-anno"/></svg></button><button class="text scale">1:1 / 100%</button><i class="arrow lg"></i></div>
        <div class="cell"><button><svg class="i14"><use href="#gear"/></svg></button><i class="arrow lg"></i></div>
        <div class="cell"><button><svg class="i16"><use href="#s-plus"/></svg></button></div>
        <div class="cell"><button><svg class="i16"><use href="#s-unit"/></svg></button><button class="text units">Десятичные</button><i class="arrow lg"></i></div>
        <div class="cell"><button><svg class="i14"><use href="#s-qp"/></svg></button></div>
        <div class="cell wide"><button><svg class="i16"><use href="#s-gfx"/></svg></button></div>
        <div class="cell wide"><button><svg class="i16"><use href="#s-isol"/></svg></button></div>
        <div class="cell"><button><svg class="i16"><use href="#s-full"/></svg></button><button><svg class="i16"><use href="#s-menu"/></svg></button></div>
    </div>
</div>

<!-- Windows taskbar -->
<div class="taskbar">
    <button class="start" aria-label="Пуск"><svg width="27" height="26"><use href="#winlogo"/></svg></button>
    <button><svg class="i32"><use href="#explorer"/></svg></button>
    <button class="running"><svg class="i32"><use href="#chrome"/></svg></button>
    <button class="running current"><svg class="i32"><use href="#acad"/></svg></button>
    <button class="running"><svg class="i32"><use href="#camt1"/></svg></button>
    <button class="running"><svg class="i32"><use href="#camt2"/></svg></button>
    <div class="tray">
        <span><i class="arrow up"></i></span>
        <span><svg class="i16"><path d="M2 1v14" stroke="#fff" stroke-width="2"/><path d="M4 2h5v2h6l-1 5H8V8H4z" fill="#fff"/></svg></span>
        <span class="hot"><svg width="15" height="15"><use href="#winlogo"/></svg></span>
        <span><svg class="i16"><circle cx="8" cy="8" r="8" fill="#f0a52a"/><path d="M8 3v2M8 7v6" stroke="#fff" stroke-width="2"/></svg></span>
        <span><svg class="i16"><path d="M5 4h10v7H5zM8 14h6M1 2h4v4H1zM3 6v8" fill="none" stroke="#fff"/></svg></span>
        <span><svg class="i16"><path d="M1 6h3l4-4v12l-4-4H1z" fill="#fff"/><path d="M10 5c2 2 2 4 0 6M12 3c3 3 3 7 0 10" fill="none" stroke="#fff"/></svg></span>
        <span class="lang">РУС</span>
        <div class="clock">16:30<br>15.08.2015</div>
    </div>
</div>

</body>
</html>
```
FILE: styles.css
```css
* {
    box-sizing: border-box;
}

body {
    margin: 0;
    height: 100vh;
    display: flex;
    flex-direction: column;
    overflow: hidden;
    font-family: "Open Sans", "Noto Sans", sans-serif;
    font-size: 11px;
    line-height: 15px;
    color: #f0f0f0;
    background: #383838;
}

button, input {
    font: inherit;
    color: inherit;
    background: none;
    border: 0;
    padding: 0;
    margin: 0;
}

button {
    white-space: nowrap;
}

svg {
    display: block;
    flex: none;
}

h2, h3 {
    margin: 0;
    font-size: 11px;
    font-weight: normal;
}

.sprite {
    position: absolute;
    width: 0;
    height: 0;
}

.i12 { width: 12px; height: 12px; }
.i14 { width: 14px; height: 14px; }
.i16 { width: 16px; height: 16px; }
.i18 { width: 18px; height: 18px; }
.i32 { width: 32px; height: 32px; }

.hole {
    fill: #5c5c5c;
}

/* Small triangles */
.arrow {
    flex: none;
    display: inline-block;
    border: 3px solid transparent;
    border-top-color: #eee;
    border-bottom: 0;
}

.arrow.lg {
    border-width: 5px 4px 0;
}

.arrow.dark { border-top-color: #222; }
.arrow.grey { border-top-color: #888; }

.arrow.up {
    border: 4px solid transparent;
    border-top: 0;
    border-bottom-color: #fff;
}

.arrow-right {
    display: block;
    border: 4px solid transparent;
    border-left-color: #fff;
    border-right: 0;
}

/* Title bar */
.titlebar {
    display: flex;
    height: 24px;
    flex: none;
    background: #e8eaea;
}

.app-button {
    position: relative;
    z-index: 2;
    display: flex;
    align-items: center;
    gap: 2px;
    width: 41px;
    height: 41px;
    padding-left: 4px;
    border: 1px solid #111;
    background: linear-gradient(#b5b5b5, #6a6a6a);
}

.qat {
    display: flex;
    align-items: center;
    gap: 8px;
    width: 214px;
    padding-left: 9px;
    background: linear-gradient(#8b8b8b, #575757);
}

.title {
    flex: 1;
    display: flex;
    justify-content: center;
    gap: 16px;
    font-size: 15px;
    line-height: 24px;
    color: #222;
}

.infocenter {
    display: flex;
    align-items: center;
    gap: 7px;
    width: 445px;
    background: linear-gradient(#8b8b8b, #575757);
}

.info-toggle {
    width: 13px;
    height: 24px;
    padding-left: 4px;
}

.info-search {
    width: 182px;
    height: 20px;
    margin-left: -6px;
    padding-left: 2px;
    border: 1px solid #333;
    background: #747474;
    font-style: italic;
}

.info-search::placeholder {
    color: #cfcfcf;
}

.signin {
    margin: 0 2px 0 -3px;
    font-size: 12px;
}

.signin .arrow {
    vertical-align: 3px;
}

.info-sep {
    width: 1px;
    height: 18px;
    background: #888;
}

.window-buttons {
    display: flex;
    width: 122px;
    padding-left: 22px;
}

.window-buttons button {
    display: flex;
    justify-content: center;
    width: 25px;
    padding-top: 3px;
}

.window-buttons .close {
    width: 46px;
    height: 19px;
    padding-top: 4px;
    background: #c3c3c5;
}

/* Ribbon tabs */
.ribbon-tabs {
    display: flex;
    flex: none;
    height: 21px;
    padding-left: 46px;
    background: #545454;
    border-top: 1px solid #333;
    border-bottom: 1px solid #333;
}

.ribbon-tabs button {
    padding: 0 11px 0 10px;
    color: #d4d4d4;
}

.ribbon-tabs .active {
    padding: 0 9px 0 8px;
    margin: 1px 0 -1px;
    color: #fff;
    background: linear-gradient(#8a8a8a, #5f5f5f);
    border: 1px solid #404040;
    border-bottom: 0;
}

.ribbon-tabs .ribbon-min {
    display: flex;
    align-items: center;
    gap: 4px;
    padding-left: 22px;
}

/* Ribbon panels */
.ribbon {
    display: flex;
    flex: none;
    height: 99px;
    background: #5c5c5c;
    border-bottom: 1px solid #8a8a8a;
}

.panel {
    flex: none;
    display: flex;
    flex-direction: column;
    border-left: 1px solid #6c6c6c;
    border-right: 1px solid #444;
}

.panel-body {
    display: flex;
    flex: 1;
    padding-top: 4px;
}

.panel h2 {
    display: flex;
    justify-content: center;
    align-items: center;
    gap: 7px;
    height: 20px;
    background: #4e4e4e;
}

.with-launch::before {
    content: "";
    flex: 1;
}

.launch {
    flex: 1;
    display: flex;
    justify-content: flex-end;
    padding-right: 3px;
}

.big {
    display: flex;
    flex-direction: column;
    align-items: center;
    height: 72px;
    padding-top: 2px;
}

.big svg {
    margin-bottom: 4px;
}

.big .arrow {
    margin-top: 3px;
}

.letter {
    height: 36px;
    font-size: 38px;
    line-height: 34px;
}

.pressed {
    background: linear-gradient(#7b93c4, #4c6aa5);
    border: 1px solid #2f426e;
}

.rows {
    display: flex;
    flex-direction: column;
}

.small {
    display: flex;
    align-items: center;
    gap: 4px;
    height: 24px;
}

.small .arrow {
    margin-left: 7px;
}

.row {
    display: flex;
    align-items: center;
    height: 24px;
}

.row button {
    width: 24px;
}

.row .small {
    width: auto;
    margin-left: 3px;
}

.icons button {
    display: flex;
    align-items: center;
    justify-content: center;
    width: 24px;
    height: 24px;
}

.combo {
    display: flex;
    align-items: center;
    gap: 3px;
    height: 22px;
    margin: 1px 0;
    padding: 0 3px;
    border: 1px solid #333;
    background: linear-gradient(#5a5a5a, #6e6e6e);
}

.combo span {
    flex: 1;
    text-align: left;
}

.swatch {
    flex: none;
    width: 14px;
    height: 14px;
    background: #000;
    border: 1px solid #777;
}

.sample {
    flex: none;
    width: 63px;
    height: 1px;
    background: #eee;
}

.draw { width: 262px; }
.draw .big:nth-child(1) { width: 58px; }
.draw .big:nth-child(2) { width: 64px; }
.draw .big:nth-child(3) { width: 54px; }
.draw .big:nth-child(4) { width: 40px; }
.draw .rows { margin-left: 7px; }

.modify { width: 400px; }
.modify .rows:nth-child(1) { width: 107px; padding-left: 6px; }
.modify .rows:nth-child(2) { width: 144px; }
.modify .rows:nth-child(3) { width: 121px; }

.annot { width: 158px; }
.annot .big { width: 56px; }

.layers { width: 336px; }
.layers .big { width: 57px; margin-left: 1px; padding-top: 1px; }
.layer-combo { width: 208px; margin-left: 1px; gap: 2px; }
.layer-combo .swatch { margin: 0 2px; }

.block { width: 163px; }
.block .big { width: 50px; }

.props { width: 243px; }
.props .big { width: 82px; }
.props .combo { width: 137px; }
.props .swatch { margin: 0 7px; }

.groups { width: 76px; }
.groups .big { width: 47px; }

.utils { width: 105px; }
.utils .big { width: 78px; }

.clip { width: 101px; }
.clip .big { width: 73px; }

.view { width: 70px; }
.view .big { width: 68px; }

/* Drawing file tabs */
.file-tabs {
    display: flex;
    flex: none;
    align-items: flex-end;
    gap: 4px;
    height: 29px;
    padding-left: 18px;
    background: #383838;
    border-bottom: 4px solid #6a6a6a;
}

.file-tab {
    display: flex;
    justify-content: space-between;
    width: 130px;
    height: 22px;
    padding: 3px 14px;
    background: linear-gradient(#707070, #5c5c5c);
    clip-path: polygon(0 100%, 7px 0, 120px 0, 100% 100%);
}

.file-tab span {
    color: #444;
}

.file-add {
    width: 22px;
    height: 15px;
    margin-bottom: 3px;
    line-height: 13px;
    background: #505050;
    clip-path: polygon(0 0, 17px 0, 100% 100%, 4px 100%);
}

/* Drawing area */
.canvas {
    position: relative;
    flex: 1;
    background: #fefefe;
    border-right: 8px solid #bccbe6;
    color: #333;
}

.viewport-label {
    padding: 7px 3px;
    font-size: 12px;
    color: #222;
}

.doc-buttons {
    position: absolute;
    top: 9px;
    right: 10px;
    display: flex;
    gap: 8px;
}

.viewcube {
    position: absolute;
    top: 35px;
    right: 12px;
    display: grid;
    grid-template-columns: 30px 82px 30px;
    grid-template-rows: 28px 84px 30px 44px;
    place-items: center;
    font-size: 20px;
    font-weight: bold;
    color: #d8d8d8;
}

.north, .south, .wcs { grid-column: 2; }
.west, .face, .east { grid-row: 2; }
.south { grid-row: 3; }
.wcs { grid-row: 4; }

.face {
    width: 52px;
    height: 52px;
    border: 1px solid #888;
    background: #e9e9ec;
    font-family: "Liberation Sans Narrow", "Open Sans", sans-serif;
    font-size: 15px;
    font-weight: normal;
    color: #8a8a92;
}

.wcs {
    width: 44px;
    height: 16px;
    background: #ececf6;
    font-size: 11px;
    font-weight: normal;
    line-height: 12px;
    color: #9c9caa;
}

.wcs i {
    display: inline-block;
    width: 7px;
    height: 1px;
    margin-left: 4px;
    background: #aaa;
    vertical-align: middle;
}

.navbar {
    position: absolute;
    top: 234px;
    right: 2px;
    width: 36px;
    height: 215px;
    padding: 8px 4px;
    border: 2px solid #c9c9c9;
    border-radius: 5px;
    background: #f6f6f6;
}

.ucs {
    position: absolute;
    left: 11px;
    bottom: 10px;
}

/* Layer properties palette */
.palette {
    position: absolute;
    left: 391px;
    right: 311px;
    top: 51px;
    bottom: 84px;
    display: flex;
    padding-right: 4px;
    border: 2px solid #3a3a3a;
    border-radius: 4px;
    background: #4f4f4f;
    color: #f0f0f0;
}

.palette-bar {
    display: flex;
    flex-direction: column;
    align-items: center;
    gap: 7px;
    width: 25px;
    padding: 4px 0 3px;
    color: #fff;
}

.palette-bar button {
    width: 12px;
    height: 12px;
}

.palette-title {
    margin-top: auto;
    margin-bottom: 2px;
    writing-mode: vertical-rl;
    transform: rotate(180deg);
    font-size: 14px;
    line-height: 18px;
}

.palette-main {
    flex: 1;
    display: flex;
    flex-direction: column;
    min-width: 0;
    margin: 2px 0 3px;
    border-left: 1px solid #333;
    border-top: 1px solid #404040;
    border-bottom: 1px solid #404040;
    background: #5c5c5c;
}

.palette-head {
    display: flex;
    justify-content: space-between;
    height: 28px;
    padding: 11px 3px 0 5px;
}

.layer-search {
    display: flex;
    align-items: center;
    width: 124px;
    height: 16px;
    margin-top: -5px;
}

.layer-search input {
    width: 112px;
}

.layer-search input::placeholder {
    color: #aaa;
}

.toolbar {
    display: flex;
    align-items: center;
    gap: 8px;
    height: 21px;
    padding: 0 10px 0 4px;
    color: #ccc;
}

.tool-sep {
    width: 1px;
    height: 16px;
    background: #444;
}

.first-layer {
    margin-left: 50px;
}

.right {
    margin-left: auto;
}

.palette-content {
    flex: 1;
    display: flex;
}

.filters {
    display: flex;
    flex-direction: column;
    width: 205px;
    padding: 10px 8px 0 7px;
}

.filters h3 {
    display: flex;
    justify-content: space-between;
    height: 22px;
}

.tree-row {
    display: flex;
    align-items: center;
    gap: 5px;
    height: 17px;
    white-space: nowrap;
}

.tree-row b {
    font-weight: normal;
    line-height: 16px;
    padding: 0 2px;
    background: #eee;
    color: #111;
}

.minus {
    width: 9px;
    height: 9px;
    margin: 0 3px 0 2px;
    border: 4px solid #ddd;
    border-width: 4px 1px;
    background: #555;
}

.child {
    padding-left: 37px;
}

.invert {
    display: flex;
    align-items: center;
    gap: 5px;
    margin-top: auto;
    height: 30px;
}

.invert input {
    appearance: none;
    width: 12px;
    height: 12px;
    background: #fff;
}

.invert svg {
    margin-left: auto;
}

.layer-list {
    flex: 1;
    min-width: 0;
}

table {
    width: 100%;
    table-layout: fixed;
    border-collapse: collapse;
}

th, td {
    padding: 0 0 0 4px;
    font-weight: normal;
    text-align: left;
    white-space: nowrap;
    overflow: hidden;
}

th {
    height: 29px;
    padding: 6px 0 0 6px;
    background: linear-gradient(#5c5c5c, #666 50%, #606060);
    border-right: 1px solid #545454;
    vertical-align: middle;
}

th:first-child {
    padding-left: 4px;
}

tbody tr {
    height: 18px;
}

td:first-child {
    padding-left: 1px;
}

tbody svg {
    height: 16px;
}

.ic svg {
    margin: 0 auto;
}

.selected {
    background: #10a2ef;
}

.dim {
    color: #a5a5a5;
}

.edit {
    padding: 0;
}

.edit input {
    width: 100%;
    height: 17px;
    padding-left: 2px;
    border: 1px solid #0b2848;
    display: block;
}

.sort {
    float: right;
    margin: 6px 4px 0;
    border: 4px solid transparent;
    border-top: 0;
    border-bottom-color: #999;
}

.color {
    display: inline-block;
    width: 12px;
    height: 12px;
    margin-right: 5px;
    background: #000;
    vertical-align: -2px;
}

.weight {
    display: inline-block;
    width: 31px;
    height: 1px;
    margin-right: 7px;
    background: #fff;
    vertical-align: 4px;
}

.c-st { width: 24px; }
.c-name { width: 172px; }
.c-color { width: 48px; }
.c-on { width: 40px; }
.c-frz { width: 51px; }
.c-lock { width: 43px; }
.c-lt { width: 83px; }
.c-lw { width: 96px; }
.c-tr { width: 54px; }
.c-style { width: 54px; }
.c-plot { width: 26px; }
.c-vp { width: 24px; }
.c-desc { width: 217px; }

.palette footer {
    height: 29px;
    padding: 8px 5px 0;
}

.tooltip {
    position: absolute;
    left: 438px;
    top: 149px;
    width: 361px;
    padding: 8px 7px;
    background: #f0f0f4;
    border: 1px solid #767676;
    color: #555;
    white-space: nowrap;
}

.cursor {
    position: absolute;
    left: 437px;
    top: 128px;
}

/* Command line */
.command {
    display: flex;
    flex: none;
    height: 54px;
    border-top: 3px solid #6a6a6a;
    color: #111;
    font-family: "DejaVu Sans Mono", monospace;
}

.command-bar {
    display: flex;
    flex-direction: column;
    align-items: center;
    justify-content: space-between;
    width: 23px;
    padding: 4px 0 1px;
    background: #5f5f5f;
}

.command-lines {
    flex: 1;
    display: flex;
    flex-direction: column;
}

.history {
    height: 29px;
    padding: 12px 2px 0;
    background: #c8c8c8;
    border-bottom: 1px solid #777;
}

.prompt {
    flex: 1;
    display: flex;
    align-items: center;
    gap: 4px;
    padding-left: 5px;
    background: #fff;
}

.prompt input {
    flex: 1;
    padding-left: 3px;
    font-style: italic;
}

.prompt input::placeholder {
    color: #888;
}

/* Layout tabs and status bar */
.statusbar {
    display: flex;
    flex: none;
    justify-content: space-between;
    height: 30px;
    background: #383838;
    border-top: 1px solid #666;
    font-size: 12px;
}

.layout-tabs {
    display: flex;
    padding-left: 12px;
}

.layout-tabs button {
    width: 56px;
    height: 19px;
    color: #b4b4b4;
    background: #505050;
    clip-path: polygon(0 0, 100% 0, 50px 100%, 6px 100%);
}

.layout-tabs .active {
    width: 68px;
    font-weight: bold;
    color: #fff;
    background: #737373;
    clip-path: polygon(0 0, 100% 0, 62px 100%, 6px 100%);
}

.layout-tabs .add {
    width: 26px;
    clip-path: polygon(6px 0, 100% 0, 20px 100%, 0 100%);
}

.status {
    display: flex;
    border: 1px solid #888;
    border-width: 1px 0;
    background: #4d4d4d;
}

.cell {
    display: flex;
    align-items: center;
    border-left: 1px solid #888;
}

.cell button {
    display: flex;
    justify-content: center;
    width: 24px;
    color: #bbb;
}

.cell .on {
    color: #3d8df0;
}

.cell .text {
    justify-content: flex-start;
    color: #fff;
}

.cell .scale { width: 59px; padding-left: 3px; }
.cell .units { width: 74px; padding-left: 4px; }

.cell .arrow {
    margin: 0 4px;
}

.coords {
    justify-content: center;
    width: 184px;
    color: #fff;
}

.model {
    justify-content: center;
    width: 59px;
    color: #fff;
}

.wide {
    padding: 0 3px;
}

/* Taskbar */
.taskbar {
    display: flex;
    flex: none;
    height: 40px;
    gap: 4px;
    background: linear-gradient(#a6829a, #9c7a8e);
    border-top: 1px solid #a68fa0;
}

.taskbar button {
    display: flex;
    justify-content: center;
    align-items: center;
    width: 58px;
}

.taskbar .start {
    width: 48px;
}

.taskbar .running {
    background: #b392a9;
    border: 1px solid #c9b3c3;
}

.taskbar .current {
    background: #d8c3d0;
    border-color: #fff;
}

.tray {
    display: flex;
    align-items: center;
    margin-left: auto;
    padding-right: 10px;
    color: #fff;
}

.tray span {
    display: flex;
    justify-content: center;
    align-items: center;
    align-self: stretch;
    width: 24px;
}

.tray .hot {
    background: radial-gradient(ellipse at left, #87405a, transparent 80%);
}

.tray .lang {
    width: 44px;
    font-size: 12px;
}

.clock {
    width: 70px;
    line-height: 18px;
    text-align: center;
}
```
